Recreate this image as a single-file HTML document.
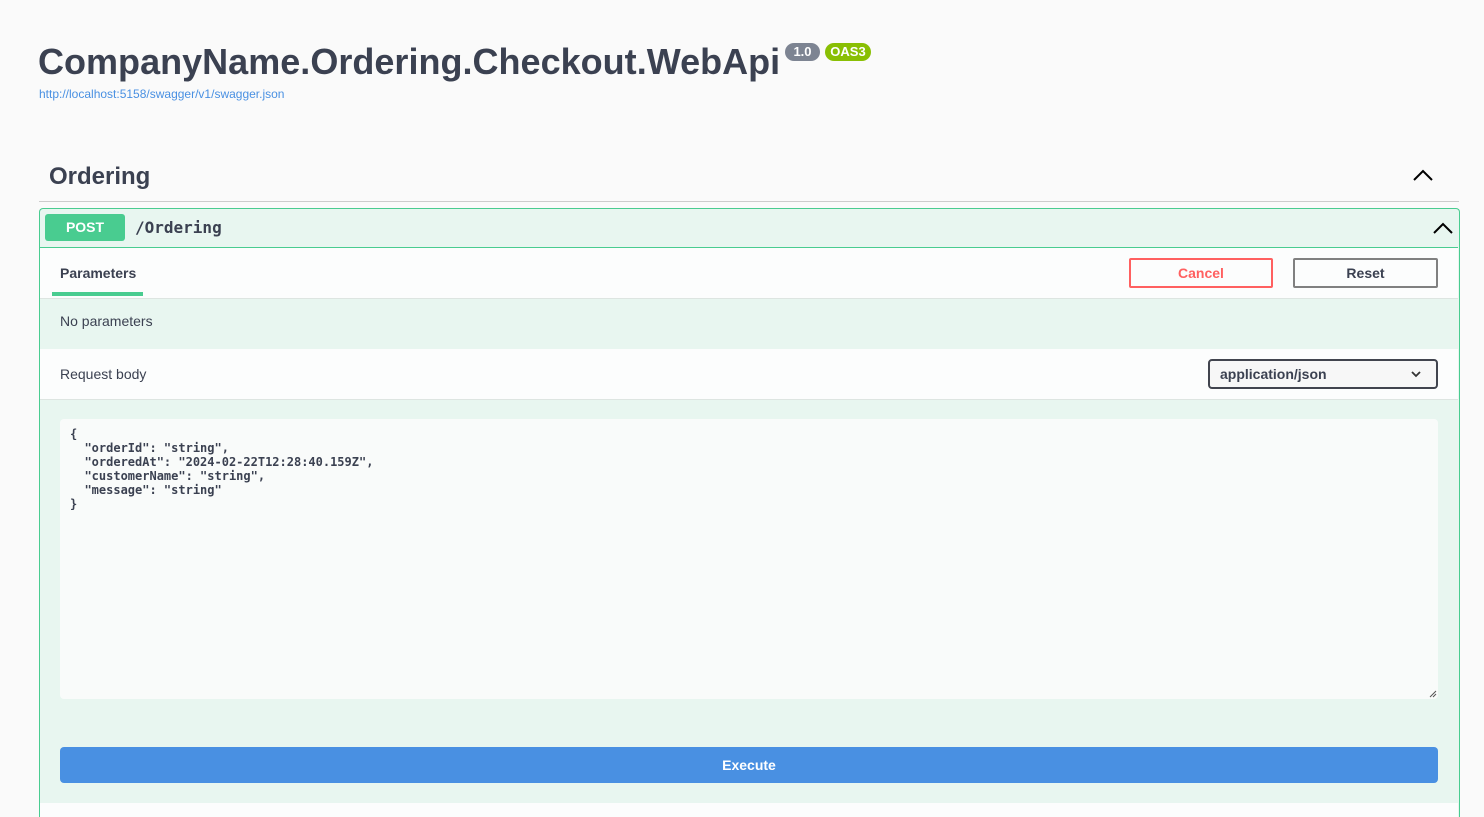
<!DOCTYPE html>
<html><head><style>
*{box-sizing:border-box;margin:0;padding:0}
html,body{width:1484px;height:817px;overflow:hidden}
body{background:#fafafa;font-family:"Liberation Sans",sans-serif;color:#3b4151;position:relative}
.a{position:absolute}
</style></head><body>
<div class="a" style="left:38px;top:40px;font-size:36px;font-weight:bold;white-space:nowrap;line-height:44px;letter-spacing:0.02px">CompanyName.Ordering.Checkout.WebApi</div>
<div class="a" style="left:785px;top:43px;width:35px;height:18px;background:#7d8492;border-radius:9px;color:#fff;font-size:13px;font-weight:bold;text-align:center;line-height:18px">1.0</div>
<div class="a" style="left:825px;top:43px;width:46px;height:18px;background:#89bf04;border-radius:9px;color:#fff;font-size:13px;font-weight:bold;text-align:center;line-height:18px">OAS3</div>
<div class="a" style="left:39px;top:87px;font-size:12px;color:#4990e2">http://localhost:5158/swagger/v1/swagger.json</div>
<div class="a" style="left:49px;top:162px;font-size:24px;font-weight:bold;line-height:30px">Ordering</div>
<svg class="a" style="left:1413px;top:168px" width="20" height="14" viewBox="0 0 20 14"><path d="M1 12 L10 3 L19 12" fill="none" stroke="#000" stroke-width="2"/></svg>
<div class="a" style="left:39px;top:201px;width:1420px;height:1px;background:#ccc"></div>
<div class="a" style="left:39px;top:208px;width:1421px;height:609px;border:1px solid #49cc90;border-bottom:none;border-radius:4px 4px 0 0;background:#e8f6f0"></div>
<div class="a" style="left:40px;top:247px;width:1418px;height:1px;background:#49cc90"></div>
<div class="a" style="left:45px;top:214px;width:80px;height:27px;background:#49cc90;border-radius:3px;color:#fff;font-size:14px;font-weight:bold;text-align:center;line-height:27px">POST</div>
<div class="a" style="left:135px;top:218px;font-family:'DejaVu Sans Mono','Liberation Mono',monospace;font-size:16px;font-weight:bold;line-height:20px">/Ordering</div>
<svg class="a" style="left:1433px;top:221px" width="20" height="14" viewBox="0 0 20 14"><path d="M1 12 L10 3 L19 12" fill="none" stroke="#000" stroke-width="2"/></svg>
<div class="a" style="left:40px;top:248px;width:1418px;height:51px;background:#fcfdfd;border-bottom:1px solid #dde5e1"></div>
<div class="a" style="left:60px;top:265px;font-size:14px;font-weight:bold">Parameters</div>
<div class="a" style="left:52px;top:292px;width:91px;height:4px;background:#49cc90"></div>
<div class="a" style="left:1129px;top:258px;width:144px;height:30px;border:2px solid #ff6060;border-radius:2px;color:#ff6060;font-size:14px;font-weight:bold;text-align:center;line-height:26px">Cancel</div>
<div class="a" style="left:1293px;top:258px;width:145px;height:30px;border:2px solid #808080;border-radius:2px;font-size:14px;font-weight:bold;text-align:center;line-height:26px">Reset</div>
<div class="a" style="left:60px;top:313px;font-size:14px">No parameters</div>
<div class="a" style="left:40px;top:349px;width:1418px;height:51px;background:#fcfdfd;border-bottom:1px solid #dde5e1"></div>
<div class="a" style="left:60px;top:366px;font-size:14px">Request body</div>
<div class="a" style="left:1208px;top:359px;width:230px;height:30px;border:2px solid #41444e;border-radius:4px;background:#f7f7f7;font-size:14px;font-weight:bold;padding-left:10px;line-height:26px">application/json</div>
<svg class="a" style="left:1410px;top:369px" width="12" height="10" viewBox="0 0 12 10"><path d="M2 3 L6 7 L10 3" fill="none" stroke="#333" stroke-width="1.8"/></svg>
<div class="a" style="left:60px;top:419px;width:1378px;height:280px;background:#f9fbfa;border-radius:4px;padding:8px 10px;font-family:'DejaVu Sans Mono','Liberation Mono',monospace;font-size:12px;font-weight:bold;line-height:14px;white-space:pre">{
  "orderId": "string",
  "orderedAt": "2024-02-22T12:28:40.159Z",
  "customerName": "string",
  "message": "string"
}</div>
<svg class="a" style="left:1429px;top:690px" width="8" height="8"><path d="M1 7 L7 1 M4 7 L7 4" stroke="#555" stroke-width="1"/></svg>
<div class="a" style="left:60px;top:747px;width:1378px;height:36px;background:#4990e2;border-radius:4px;color:#fff;font-size:14px;font-weight:bold;text-align:center;line-height:36px">Execute</div>
<div class="a" style="left:40px;top:803px;width:1418px;height:14px;background:#fcfdfd"></div>
</body></html>
